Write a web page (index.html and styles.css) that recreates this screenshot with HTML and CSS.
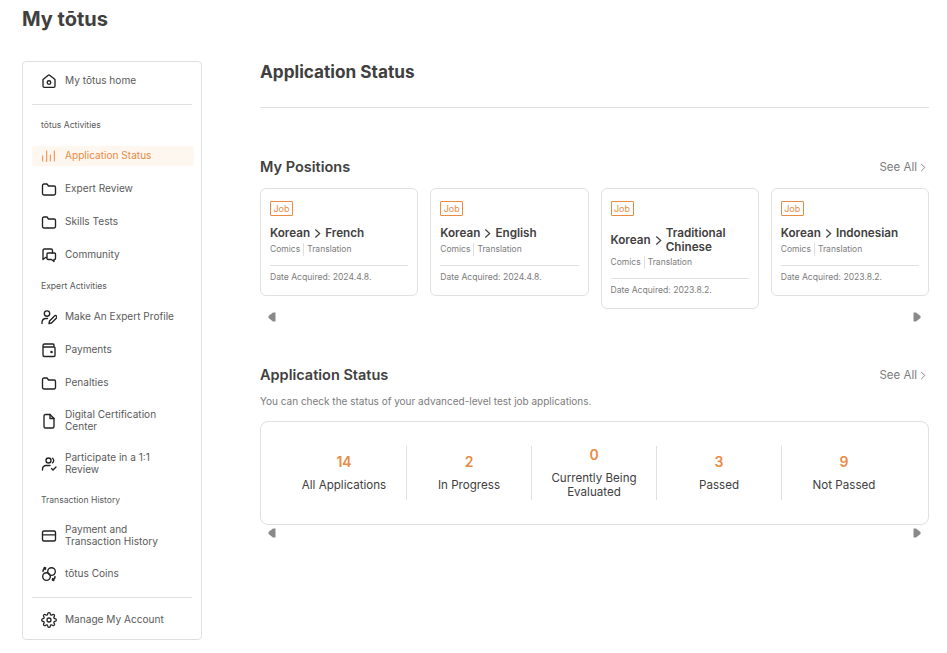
FILE: index.html
```html
<!DOCTYPE html>
<html lang="en">
<head>
    <meta charset="UTF-8">
    <title>My tōtus</title>
    <link rel="stylesheet" href="styles.css">
</head>
<body>
    <h1 class="page-title">My tōtus</h1>
    <div class="layout">
        <nav class="sidebar">
            <a class="nav-item">
                <svg class="icon" viewBox="0 0 16 16"><path d="M2 6.500l5.300-4.300a1 1 0 0 1 1.400 0L14 6.500v6.500a1.300 1.300 0 0 1-1.300 1.300H3.300A1.300 1.300 0 0 1 2 13z"/><circle cx="8" cy="9.500" r="1.800"/></svg>
                <span>My tōtus home</span>
            </a>
            <div class="nav-divider"></div>
            <div class="nav-heading">tōtus Activities</div>
            <a class="nav-item active">
                <svg class="icon" viewBox="0 0 16 16"><path d="M1.700 8v5M5.700 3v10.500M9.300 7v6M13.300 3v10"/></svg>
                <span>Application Status</span>
            </a>
            <a class="nav-item">
                <svg class="icon" viewBox="0 0 16 16"><path d="M1.500 4.500A1.500 1.500 0 0 1 3 3h3l1.500 2H13a1.500 1.500 0 0 1 1.500 1.500v6A1.500 1.500 0 0 1 13 14H3a1.500 1.500 0 0 1-1.500-1.500z"/></svg>
                <span>Expert Review</span>
            </a>
            <a class="nav-item">
                <svg class="icon" viewBox="0 0 16 16"><path d="M1.500 4.500A1.500 1.500 0 0 1 3 3h3l1.500 2H13a1.500 1.500 0 0 1 1.500 1.500v6A1.500 1.500 0 0 1 13 14H3a1.500 1.500 0 0 1-1.500-1.500z"/></svg>
                <span>Skills Tests</span>
            </a>
            <a class="nav-item">
                <svg class="icon" viewBox="0 0 16 16"><path d="M5.500 10.500H4.500L2 12.500V3.500A1.500 1.500 0 0 1 3.500 2h6.500A1.500 1.500 0 0 1 11.500 3.500V6"/><path d="M7 6h6.500a1 1 0 0 1 1 1v4.500a1 1 0 0 1-1 1H13v2l-2.500-2H7a1 1 0 0 1-1-1V7a1 1 0 0 1 1-1z"/></svg>
                <span>Community</span>
            </a>
            <div class="nav-heading">Expert Activities</div>
            <a class="nav-item">
                <svg class="icon" viewBox="0 0 16 16"><circle cx="6" cy="4.500" r="2.700"/><path d="M1 14.500v-1.500A4 4 0 0 1 5 9.500h1.500"/><path d="M8 14.500l.5-2.500 5-5a1.300 1.300 0 0 1 2 2l-5 5z"/></svg>
                <span>Make An Expert Profile</span>
            </a>
            <a class="nav-item">
                <svg class="icon" viewBox="0 0 16 16"><path d="M13 5V3a1 1 0 0 0-1-1H3.500A1.500 1.500 0 0 0 2 3.500v9.500A1.500 1.500 0 0 0 3.500 14.500h9.500a1 1 0 0 0 1-1V6a1 1 0 0 0-1-1H2"/><circle class="dot" cx="10.500" cy="10" r=".6"/></svg>
                <span>Payments</span>
            </a>
            <a class="nav-item">
                <svg class="icon" viewBox="0 0 16 16"><path d="M1.500 4.500A1.500 1.500 0 0 1 3 3h3l1.500 2H13a1.500 1.500 0 0 1 1.500 1.500v6A1.500 1.500 0 0 1 13 14H3a1.500 1.500 0 0 1-1.500-1.500z"/></svg>
                <span>Penalties</span>
            </a>
            <a class="nav-item tall">
                <svg class="icon" viewBox="0 0 16 16"><path d="M3 3a1.500 1.500 0 0 1 1.500-1.500H9L13 5.500v8a1.500 1.500 0 0 1-1.500 1.500h-7A1.500 1.500 0 0 1 3 13.500z"/><path d="M9 1.500v4h4"/></svg>
                <span>Digital Certification<br>Center</span>
            </a>
            <a class="nav-item tall">
                <svg class="icon" viewBox="0 0 16 16"><circle cx="7.500" cy="4.500" r="2.500"/><path d="M1.500 14v-1A3.500 3.500 0 0 1 5 9.500h4"/><path d="M10.500 12.500l1.500 1.500 3-3"/><path d="M11.500 2.300a2.800 2.800 0 0 1 0 4.600"/></svg>
                <span>Participate in a 1:1<br>Review</span>
            </a>
            <div class="nav-heading">Transaction History</div>
            <a class="nav-item tall">
                <svg class="icon" viewBox="0 0 16 16"><rect x="1.500" y="3" width="13" height="10" rx="1.500"/><path d="M1.500 6.800h13"/></svg>
                <span>Payment and<br>Transaction History</span>
            </a>
            <a class="nav-item">
                <svg class="icon" viewBox="0 0 16 16"><circle cx="5.500" cy="10.500" r="3.800"/><circle cx="10.500" cy="5.500" r="3.800"/><path d="M2 5.500a3.500 3.500 0 0 1 2.500-3.500M3.200 1.500l1.500.5-.5 1.500M14 10.500a3.500 3.500 0 0 1-2.500 3.500M12.800 14.500l-1.500-.5.5-1.500"/></svg>
                <span>tōtus Coins</span>
            </a>
            <div class="nav-divider"></div>
            <a class="nav-item">
                <svg class="icon gear" viewBox="0 0 24 24"><circle cx="12" cy="12" r="3"/><path d="M19.4 15a1.65 1.65 0 0 0 .33 1.82l.06.06a2 2 0 0 1 0 2.83 2 2 0 0 1-2.83 0l-.06-.06a1.65 1.65 0 0 0-1.82-.33 1.65 1.65 0 0 0-1 1.51V21a2 2 0 0 1-2 2 2 2 0 0 1-2-2v-.09A1.65 1.65 0 0 0 9 19.4a1.65 1.65 0 0 0-1.82.33l-.06.06a2 2 0 0 1-2.83 0 2 2 0 0 1 0-2.83l.06-.06a1.65 1.65 0 0 0 .33-1.82 1.65 1.65 0 0 0-1.51-1H3a2 2 0 0 1-2-2 2 2 0 0 1 2-2h.09A1.65 1.65 0 0 0 4.6 9a1.65 1.65 0 0 0-.33-1.82l-.06-.06a2 2 0 0 1 0-2.83 2 2 0 0 1 2.83 0l.06.06a1.65 1.65 0 0 0 1.82.33H9a1.65 1.65 0 0 0 1-1.51V3a2 2 0 0 1 2-2 2 2 0 0 1 2 2v.09a1.65 1.65 0 0 0 1 1.51 1.65 1.65 0 0 0 1.82-.33l.06-.06a2 2 0 0 1 2.83 0 2 2 0 0 1 0 2.83l-.06.06a1.65 1.65 0 0 0-.33 1.82V9a1.65 1.65 0 0 0 1.51 1H21a2 2 0 0 1 2 2 2 2 0 0 1-2 2h-.09a1.65 1.65 0 0 0-1.51 1z"/></svg>
                <span>Manage My Account</span>
            </a>
        </nav>

        <main class="content">
            <h2 class="content-title">Application Status</h2>

            <section class="positions">
                <div class="section-head">
                    <h3>My Positions</h3>
                    <a class="see-all">See All
                        <svg viewBox="0 0 6 10"><path d="M1 1l4 4-4 4"/></svg>
                    </a>
                </div>
                <div class="cards">
                    <div class="card">
                        <span class="badge">Job</span>
                        <div class="lang">
                            <span>Korean</span>
                            <svg class="lang-arrow" viewBox="0 0 8 12"><path d="M1.500 1.500L6.500 6l-5 4.500"/></svg>
                            <span>French</span>
                        </div>
                        <div class="tags"><span>Comics</span><span>Translation</span></div>
                        <div class="date">Date Acquired: 2024.4.8.</div>
                    </div>
                    <div class="card">
                        <span class="badge">Job</span>
                        <div class="lang">
                            <span>Korean</span>
                            <svg class="lang-arrow" viewBox="0 0 8 12"><path d="M1.500 1.500L6.500 6l-5 4.500"/></svg>
                            <span>English</span>
                        </div>
                        <div class="tags"><span>Comics</span><span>Translation</span></div>
                        <div class="date">Date Acquired: 2024.4.8.</div>
                    </div>
                    <div class="card">
                        <span class="badge">Job</span>
                        <div class="lang">
                            <span>Korean</span>
                            <svg class="lang-arrow" viewBox="0 0 8 12"><path d="M1.500 1.500L6.500 6l-5 4.500"/></svg>
                            <span>Traditional<br>Chinese</span>
                        </div>
                        <div class="tags"><span>Comics</span><span>Translation</span></div>
                        <div class="date">Date Acquired: 2023.8.2.</div>
                    </div>
                    <div class="card">
                        <span class="badge">Job</span>
                        <div class="lang">
                            <span>Korean</span>
                            <svg class="lang-arrow" viewBox="0 0 8 12"><path d="M1.500 1.500L6.500 6l-5 4.500"/></svg>
                            <span>Indonesian</span>
                        </div>
                        <div class="tags"><span>Comics</span><span>Translation</span></div>
                        <div class="date">Date Acquired: 2023.8.2.</div>
                    </div>
                </div>
                <div class="arrows">
                    <svg viewBox="0 0 8 10"><path d="M7.500 .5v9H5L.5 6V4L5 .5z"/></svg>
                    <svg viewBox="0 0 8 10"><path d="M.5 .5v9H3L7.500 6V4L3 .5z"/></svg>
                </div>
            </section>

            <section class="status">
                <div class="section-head">
                    <h3>Application Status</h3>
                    <a class="see-all">See All
                        <svg viewBox="0 0 6 10"><path d="M1 1l4 4-4 4"/></svg>
                    </a>
                </div>
                <p class="status-note">You can check the status of your advanced-level test job applications.</p>
                <div class="stats">
                    <div class="stat"><strong>14</strong><span>All Applications</span></div>
                    <div class="stat"><strong>2</strong><span>In Progress</span></div>
                    <div class="stat"><strong>0</strong><span>Currently Being<br>Evaluated</span></div>
                    <div class="stat"><strong>3</strong><span>Passed</span></div>
                    <div class="stat"><strong>9</strong><span>Not Passed</span></div>
                </div>
                <div class="arrows">
                    <svg viewBox="0 0 8 10"><path d="M7.500 .5v9H5L.5 6V4L5 .5z"/></svg>
                    <svg viewBox="0 0 8 10"><path d="M.5 .5v9H3L7.500 6V4L3 .5z"/></svg>
                </div>
            </section>
        </main>
    </div>
</body>
</html>
```

FILE: styles.css
```css
:root {
    --orange: #e98b43;
    --text-dark: #404040;
    --text-mid: #5a5a5a;
    --text-light: #7c7c7c;
    --border: #e0e0e0;
}

* {
    margin: 0;
    padding: 0;
    box-sizing: border-box;
}

body {
    font-family: Inter, "Noto Sans", sans-serif;
    background-color: #ffffff;
    color: var(--text-dark);
    padding: 7px 18px 0 22px;
}

.page-title {
    font-size: 20px;
    line-height: 24px;
    font-weight: 700;
}

.layout {
    display: flex;
    align-items: flex-start;
    gap: 58px;
    margin-top: 30px;
}

/* sidebar */
.sidebar {
    width: 180px;
    height: 579px;
    flex-shrink: 0;
    display: flex;
    flex-direction: column;
    gap: 13px;
    padding: 9px 7px 10px 9px;
    border: 1px solid var(--border);
    border-radius: 4px;
}

.nav-item {
    display: flex;
    align-items: center;
    gap: 8px;
    min-height: 20px;
    padding-left: 9px;
    font-size: 10.1px;
    line-height: 12.5px;
    color: var(--text-mid);
    border-radius: 3px;
}

.nav-item span {
    padding-bottom: 2px;
}

.nav-item.tall {
    min-height: 30px;
}

.nav-item.active {
    color: var(--orange);
    background-color: #fef7f0;
}

.icon {
    width: 16px;
    height: 16px;
    flex-shrink: 0;
    fill: none;
    stroke: #222222;
    stroke-width: 1.35;
    stroke-linecap: round;
    stroke-linejoin: round;
}

.icon.gear {
    stroke-width: 1.9;
}

.active .icon {
    stroke: var(--orange);
    stroke-width: 1;
}

.icon .dot {
    fill: #222222;
}

.nav-divider {
    width: 160px;
    height: 1px;
    flex-shrink: 0;
    background-color: var(--border);
}

.nav-divider + .nav-item {
    margin-top: -1px;
}

.nav-heading {
    height: 14px;
    margin-bottom: 1px;
    padding-left: 9px;
    font-size: 8.6px;
    line-height: 14px;
    color: var(--text-mid);
}

.nav-item + .nav-heading {
    margin-top: 1px;
}

/* main */
.content {
    flex: 1;
    min-width: 0;
}

.content-title {
    font-size: 17.2px;
    line-height: 22px;
    font-weight: 700;
    padding-bottom: 24px;
    border-bottom: 1px solid var(--border);
}

.positions {
    margin-top: 48px;
}

.section-head {
    display: flex;
    justify-content: space-between;
    align-items: center;
    height: 20px;
}

.section-head h3 {
    font-size: 14.5px;
    font-weight: 600;
}

.see-all {
    display: flex;
    align-items: center;
    gap: 3px;
    margin-top: 2px;
    padding-right: 3px;
    font-size: 11.5px;
    color: var(--text-light);
}

.see-all svg {
    width: 6px;
    height: 9px;
    fill: none;
    stroke: #777777;
    stroke-width: 1;
}

.cards {
    display: grid;
    grid-template-columns: repeat(4, 1fr);
    gap: 12px;
    align-items: start;
    margin-top: 12px;
}

.card {
    padding: 12px 9px 12px 9px;
    border: 1px solid var(--border);
    border-radius: 6px;
}

.badge {
    display: block;
    width: 23px;
    height: 15px;
    font-size: 9px;
    line-height: 13px;
    text-align: center;
    color: var(--orange);
    border: 1px solid var(--orange);
    border-radius: 1px;
}

.lang {
    display: flex;
    align-items: center;
    gap: 4px;
    min-height: 14.5px;
    margin-top: 10px;
    font-size: 11.7px;
    line-height: 14px;
    font-weight: 600;
}

.lang-arrow {
    width: 7px;
    height: 11px;
    flex-shrink: 0;
    fill: none;
    stroke: var(--text-dark);
    stroke-width: 1.4;
}

.tags {
    display: flex;
    margin-top: 2px;
    font-size: 8.5px;
    line-height: 13px;
    color: var(--text-light);
}

.tags span + span {
    margin-left: 3px;
    padding-left: 3px;
    border-left: 1px solid var(--border);
}

.date {
    margin-top: 9px;
    padding-top: 5px;
    border-top: 1px solid var(--border);
    font-size: 8.6px;
    line-height: 12px;
    color: var(--text-light);
}

.arrows {
    display: flex;
    justify-content: space-between;
    padding: 0 8px;
    margin-top: 3px;
}

.arrows svg {
    width: 8px;
    height: 10px;
    fill: #8a8a8a;
}

.status {
    margin-top: 42px;
}

.status-note {
    margin-top: 10px;
    font-size: 10px;
    line-height: 14px;
    color: var(--text-light);
}

.stats {
    display: flex;
    padding: 24px 22px 24px 21px;
    margin-top: 13px;
    border: 1px solid var(--border);
    border-radius: 8px;
}

.stat {
    flex: 1;
    min-height: 54px;
    display: flex;
    flex-direction: column;
    justify-content: center;
    align-items: center;
    gap: 8px;
    text-align: center;
    font-size: 11.6px;
    line-height: 14px;
    color: var(--text-dark);
}

.stat + .stat {
    border-left: 1px solid var(--border);
}

.stat strong {
    font-size: 14px;
    line-height: 16px;
    font-weight: 600;
    color: var(--orange);
}
```
